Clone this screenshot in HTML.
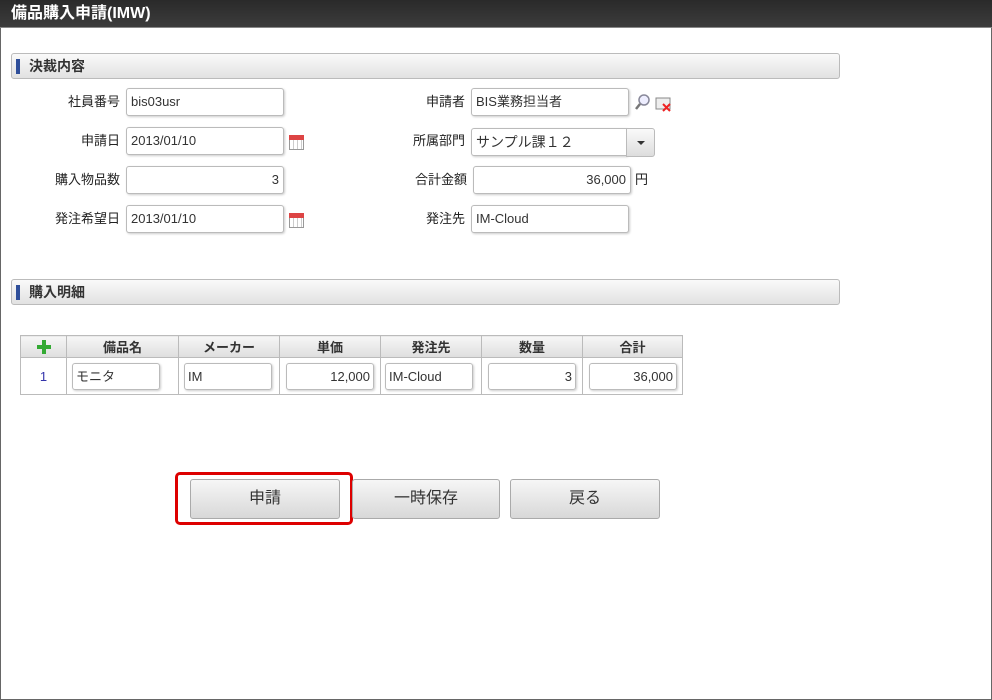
<!DOCTYPE html>
<html><head><meta charset="utf-8"><style>
*{box-sizing:border-box;margin:0;padding:0}
body{width:992px;height:700px;background:#fff;font-family:"Liberation Sans","Noto Sans CJK JP",sans-serif;font-size:13px;color:#222;position:relative;overflow:hidden}
.frame{position:absolute;left:0;top:0;width:992px;height:700px;border-left:1px solid #666;border-right:1px solid #666;border-bottom:1px solid #666}
.title{position:absolute;left:0;top:0;width:992px;height:28px;background:linear-gradient(#2a2a2a,#3c3c3c);border-bottom:1px solid #888;color:#fff;font-weight:bold;font-size:16px;line-height:28px;padding-left:11px}
.sec{position:absolute;left:11px;width:829px;height:26px;border:1px solid #bbb;border-radius:3px;background:linear-gradient(#fafafa,#e2e2e2);font-weight:bold;font-size:14px;line-height:24px;padding-left:17px;color:#333}
.sec:before{content:"";position:absolute;left:4px;top:5px;width:4px;height:15px;background:#2f4f9a}
.lbl{position:absolute;text-align:right;font-size:13px;line-height:28px}
.in{position:absolute;height:28px;border:1px solid #bbb;border-radius:3px;background:#fff;box-shadow:1px 1px 2px #ccc;font-size:13px;line-height:26px;padding:0 4px;color:#333}
.r{text-align:right}
table{position:absolute;left:20px;top:335px;border-collapse:collapse}
th{height:22px;background:linear-gradient(#f6f6f6,#dedede);border:1px solid #bbb;font-size:13px;font-weight:bold;color:#333}
td{height:37px;border:1px solid #bbb;position:relative}
.cin{position:absolute;top:5px;height:27px;border:1px solid #bbb;border-radius:3px;box-shadow:1px 1px 2px #ccc;line-height:25px;padding:0 3px;font-size:13px;color:#333}
.btn{position:absolute;top:479px;height:40px;border:1px solid #aaa;border-radius:3px;background:linear-gradient(#f6f6f6,#d8d8d8);font-size:16px;text-align:center;line-height:38px;color:#333}
.cal{position:absolute;width:15px;height:15px;border:1px solid #999;background:repeating-linear-gradient(90deg,#fff 0 3px,#ccc 3px 4px);}
.cal:before{content:"";position:absolute;left:-1px;top:-1px;width:15px;height:5px;background:#d44}
</style></head><body>
<div class="frame"></div>
<div class="title">備品購入申請(IMW)</div>
<div class="sec" style="top:53px">決裁内容</div>
<div class="lbl" style="left:30px;width:90px;top:88px">社員番号</div>
<div class="in" style="left:126px;top:88px;width:158px">bis03usr</div>
<div class="lbl" style="left:30px;width:90px;top:127px">申請日</div>
<div class="in" style="left:126px;top:127px;width:158px">2013/01/10</div>
<div class="cal" style="left:289px;top:135px"></div>
<div class="lbl" style="left:30px;width:90px;top:166px">購入物品数</div>
<div class="in r" style="left:126px;top:166px;width:158px">3</div>
<div class="lbl" style="left:30px;width:90px;top:205px">発注希望日</div>
<div class="in" style="left:126px;top:205px;width:158px">2013/01/10</div>
<div class="cal" style="left:289px;top:213px"></div>

<div class="lbl" style="left:370px;width:95px;top:88px">申請者</div>
<div class="in" style="left:471px;top:88px;width:158px">BIS業務担当者</div>
<svg style="position:absolute;left:634px;top:93px" width="40" height="20"><circle cx="10" cy="7" r="5" fill="#eef" stroke="#889" stroke-width="1.5"/><line x1="6" y1="11" x2="2" y2="16" stroke="#777" stroke-width="2.5"/><rect x="22" y="5" width="14" height="11" fill="#eee" stroke="#888"/><path d="M29 11l7 7M36 11l-7 7" stroke="#e22" stroke-width="2"/></svg>
<div class="lbl" style="left:370px;width:95px;top:127px">所属部門</div>
<div class="in" style="left:471px;top:128px;width:156px;font-size:14px;border-radius:3px 0 0 3px">サンプル課１２</div>
<div style="position:absolute;left:626px;top:128px;width:29px;height:29px;border:1px solid #bbb;border-radius:0 3px 3px 0;background:linear-gradient(#fafafa,#ddd)"><div style="position:absolute;left:10px;top:12px;border:4px solid transparent;border-top:4px solid #333"></div></div>
<div class="lbl" style="left:370px;width:97px;top:166px">合計金額</div>
<div class="in r" style="left:473px;top:166px;width:158px">36,000</div>
<div class="lbl" style="left:635px;top:166px">円</div>
<div class="lbl" style="left:370px;width:95px;top:205px">発注先</div>
<div class="in" style="left:471px;top:205px;width:158px">IM-Cloud</div>

<div class="sec" style="top:279px">購入明細</div>
<table>
<tr><th style="width:46px"><svg width="14" height="14" style="display:block;margin:auto"><path d="M5 0h4v5h5v4h-5v5h-4v-5h-5v-4h5z" fill="#3a3"/></svg></th><th style="width:112px">備品名</th><th style="width:101px">メーカー</th><th style="width:101px">単価</th><th style="width:101px">発注先</th><th style="width:101px">数量</th><th style="width:100px">合計</th></tr>
<tr><td style="text-align:center;color:#33a">1</td>
<td><div class="cin" style="left:5px;width:88px">モニタ</div></td>
<td><div class="cin" style="left:5px;width:88px">IM</div></td>
<td><div class="cin r" style="left:6px;width:88px">12,000</div></td>
<td><div class="cin" style="left:4px;width:88px">IM-Cloud</div></td>
<td><div class="cin r" style="left:6px;width:88px">3</div></td>
<td><div class="cin r" style="left:6px;width:88px">36,000</div></td></tr>
</table>

<div style="position:absolute;left:175px;top:472px;width:178px;height:53px;border:3px solid #d00;border-radius:5px"></div>
<div class="btn" style="left:190px;width:150px">申請</div>
<div class="btn" style="left:352px;width:148px">一時保存</div>
<div class="btn" style="left:510px;width:150px">戻る</div>
</body></html>
